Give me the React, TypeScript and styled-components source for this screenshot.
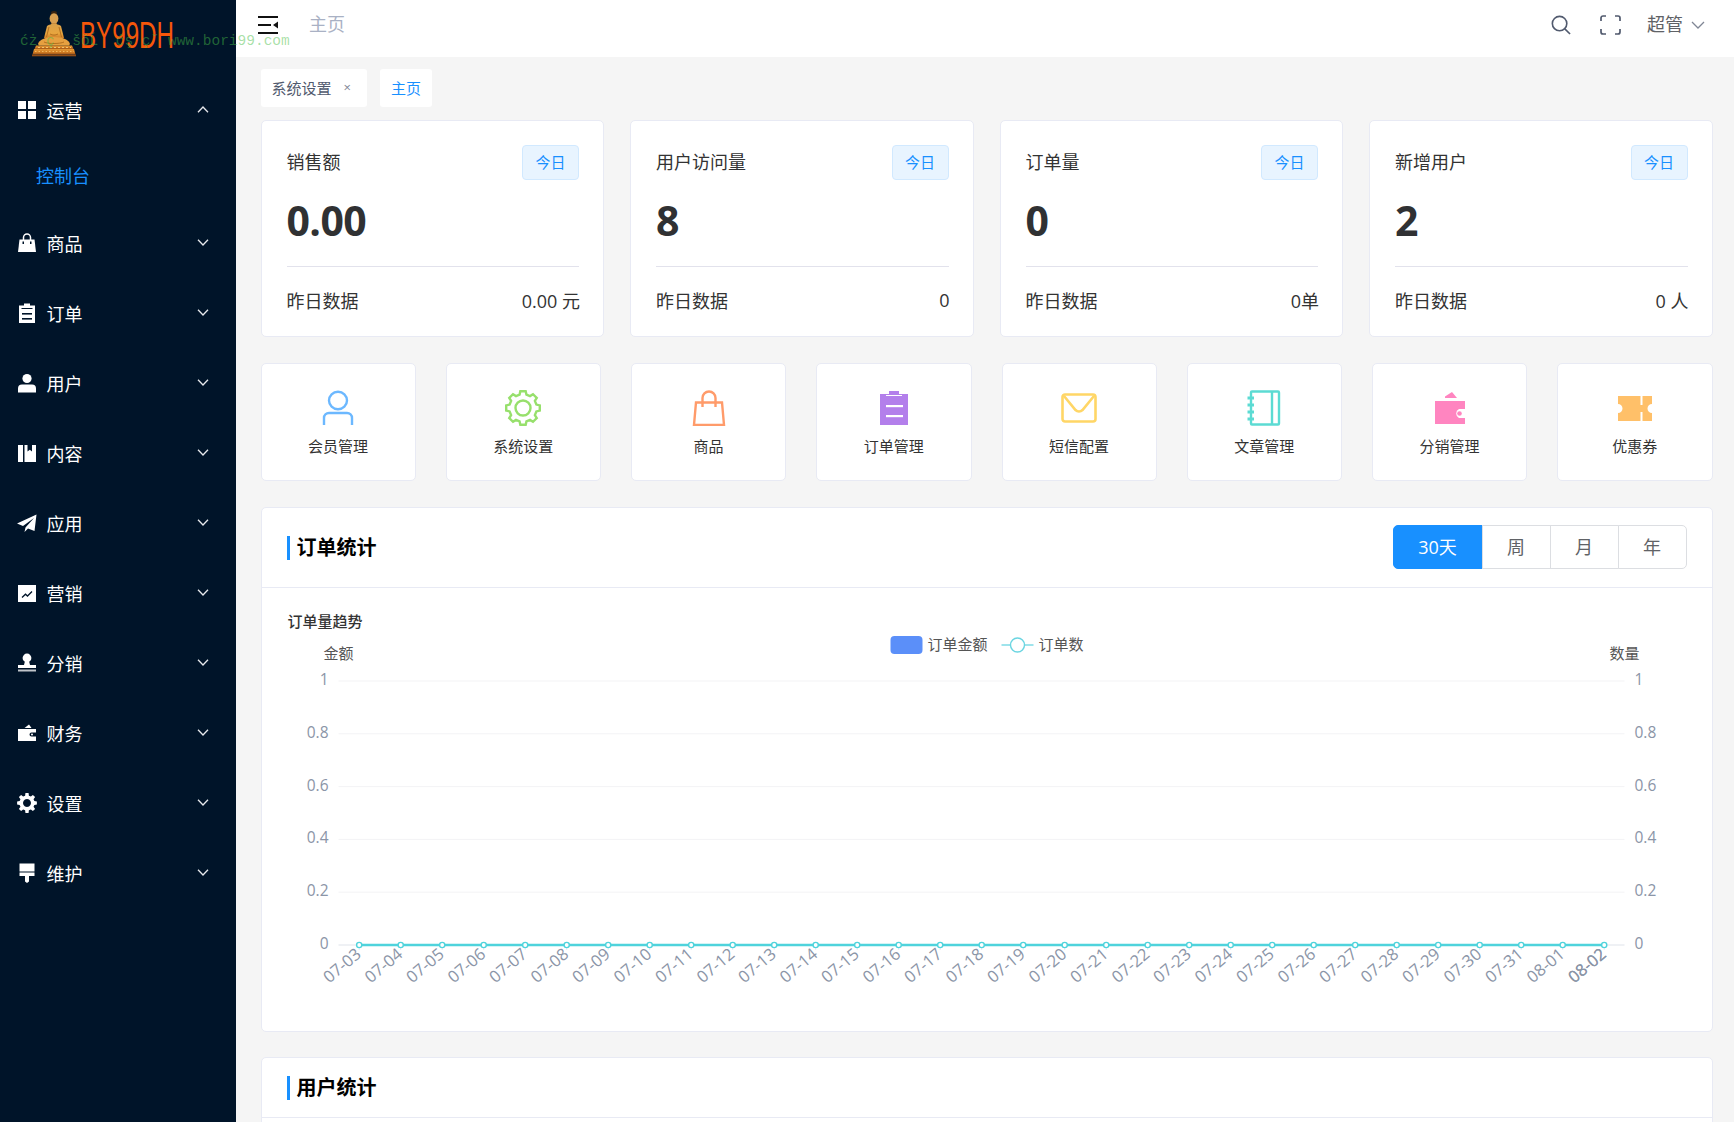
import React from "react";
import styled, { createGlobalStyle } from "styled-components";

const NAVY = "#001429";
const BLUE = "#1890ff";
const FONT = `"Open Sans", "Noto Sans CJK SC", sans-serif`;

const GlobalStyle = createGlobalStyle`
  html, body {
    margin: 0;
    height: 100%;
    overflow: hidden;
    background: #f5f5f5;
    font-family: ${FONT};
  }
  * { box-sizing: border-box; }
`;

// outline of a cog wheel, used by the sidebar icon and the shortcut icon
const gearPath = (cx: number, cy: number, outer: number, inner: number, teeth: number) => {
  const step = (Math.PI * 2) / teeth;
  let d = "";
  for (let i = 0; i < teeth; i++) {
    const a = i * step;
    const pts: [number, number][] = [
      [a - step * 0.32, inner],
      [a - step * 0.2, outer],
      [a + step * 0.2, outer],
      [a + step * 0.32, inner],
    ];
    pts.forEach(([t, r], j) => {
      const x = (cx + Math.sin(t) * r).toFixed(2);
      const y = (cy - Math.cos(t) * r).toFixed(2);
      d += `${i === 0 && j === 0 ? "M" : "L"}${x} ${y}`;
    });
  }
  return d + "Z";
};

const NavIcon = ({ children }: { children: React.ReactNode }) => (
  <svg width="20" height="20" viewBox="0 0 20 20" fill="#fff">{children}</svg>
);

const navIcons: Record<string, React.ReactNode> = {
  grid: (
    <>
      <rect x="1" y="1" width="8" height="8" />
      <rect x="11" y="1" width="8" height="8" />
      <rect x="1" y="11" width="8" height="8" />
      <rect x="11" y="11" width="8" height="8" />
    </>
  ),
  bag: (
    <>
      <path d="M2.5 6.5H17.5L19 19H1Z" />
      <path d="M6.5 7V4.5a3.5 3.5 0 0 1 7 0V7" fill="none" stroke="#fff" strokeWidth="1.5" />
      <rect x="5.5" y="8.5" width="1.5" height="2.5" fill={NAVY} />
      <rect x="13" y="8.5" width="1.5" height="2.5" fill={NAVY} />
    </>
  ),
  clip: (
    <>
      <rect x="2" y="2.5" width="16" height="17.5" />
      <rect x="7" y="0.5" width="6" height="3" />
      <rect x="4.5" y="5" width="11" height="1" fill={NAVY} />
      <rect x="5" y="10" width="10" height="1.6" fill={NAVY} />
      <rect x="5" y="15" width="10" height="1.6" fill={NAVY} />
    </>
  ),
  user: (
    <>
      <circle cx="10" cy="5.5" r="4.6" />
      <path d="M1 19.5V15.5a4 4 0 0 1 4-4h10a4 4 0 0 1 4 4v4Z" />
    </>
  ),
  book: (
    <>
      <rect x="1" y="2" width="5" height="17" />
      <path d="M7.5 2H10.5V8.5L12.8 6.8 15 8.5V2H19V19H7.5Z" />
    </>
  ),
  plane: <path d="M19.5 1.5 0 10.5 6 13 17 5 8.5 14.5 7.5 19 11 15.5 17.5 18Z" />,
  chart: (
    <>
      <rect x="1" y="2" width="18" height="17" />
      <path d="M5 14.5 8.5 11.2 10.5 13 15 8.5" fill="none" stroke={NAVY} strokeWidth="1.3" />
    </>
  ),
  stamp: (
    <>
      <circle cx="10" cy="5" r="4.4" />
      <path d="M8 8H12L13 12H19V15H1V12H7Z" />
      <rect x="1" y="16.5" width="18" height="2" opacity="0.75" />
    </>
  ),
  wallet: (
    <>
      <path d="M7.5 5 12 1.5 14.5 5Z" />
      <path d="M1 6H19V9.5H14.5a2 2 0 0 0 0 4H19V18H1Z" />
      <circle cx="15" cy="11.5" r="1" />
    </>
  ),
  gear: (
    <path
      fillRule="evenodd"
      d={gearPath(10, 10, 10, 7.6, 8) + "M10 6a4 4 0 1 0 .01 0Z"}
    />
  ),
  brush: (
    <>
      <rect x="2.5" y="0.5" width="15" height="8" />
      <rect x="2.5" y="9.5" width="15" height="3.5" />
      <path d="M8 13H12V18.5L10 20 8 18.5Z" />
    </>
  ),
};

const Chevron = ({ up }: { up?: boolean }) => (
  <svg width="12" height="7" viewBox="0 0 12 7" fill="none" stroke="#e6e8ec" strokeWidth="1.3">
    <path d={up ? "M1 6.3 6 1 11 6.3" : "M1 .7 6 6 11 .7"} />
  </svg>
);

const Shell = styled.div`
  display: flex;
  height: 1122px;
  overflow: hidden;
`;

const Sidebar = styled.aside`
  position: relative;
  z-index: 2;
  flex: 0 0 236px;
  background: ${NAVY};
`;

const Logo = styled.div`
  display: flex;
  align-items: flex-start;
  height: 75px;
  padding: 11px 0 0 32px;
`;

const Watermark = styled.span`
  position: absolute;
  top: 32px;
  left: 20px;
  font: 14.5px/18px "Liberation Mono", monospace;
  white-space: pre;
  color: rgba(70, 190, 70, 0.48);
  pointer-events: none;
`;

const NavRow = styled.div`
  display: flex;
  align-items: center;
  height: 70px;
  padding: 0 27px 0 16.5px;
  color: #fff;
  font-size: 18px;
`;

const NavLabel = styled.span`
  flex: 1;
  margin-left: 10px;
`;

const NavArrow = styled.span`
  display: flex;
  margin-top: -2px;
`;

const SubRow = styled.div`
  display: flex;
  align-items: center;
  height: 63px;
  padding: 0 0 4px 36px;
  color: ${BLUE};
  font-size: 18px;
`;

const Main = styled.main`
  flex: 1;
  min-width: 0;
`;

const TopBar = styled.header`
  display: flex;
  align-items: center;
  height: 57px;
  padding: 0 29px 8px 22px;
  background: #fff;
`;

const Crumb = styled.span`
  flex: 1;
  margin-left: 31px;
  padding-bottom: 3px;
  font-size: 18px;
  color: #a9b1c4;
`;

const TopIcon = styled.span<{ $gap: number }>`
  display: flex;
  margin-right: ${(p) => p.$gap}px;
`;

const UserName = styled.span`
  font-size: 18px;
  color: #606266;
  margin-right: 8px;
  padding-bottom: 3px;
`;

const Content = styled.div`
  padding: 12px 21.5px 0 24.5px;
`;

const TabBar = styled.div`
  display: flex;
  gap: 13px;
  height: 38px;
`;

const Tab = styled.div<{ $active?: boolean }>`
  display: flex;
  align-items: center;
  gap: 11px;
  padding: 0 11px 2px;
  border-radius: 3px;
  background: #fff;
  font-size: 15px;
  color: ${(p) => (p.$active ? BLUE : "#515a6e")};
`;

const TabClose = styled.span`
  font-size: 13px;
  color: #808695;
  margin: 0 5px 0 1px;
`;

const StatGrid = styled.section`
  display: grid;
  grid-template-columns: repeat(4, 1fr);
  gap: 26px;
  margin-top: 13px;
`;

const Card = styled.div`
  background: #fff;
  border: 1px solid #e8eaf4;
  border-radius: 5px;
`;

const StatCard = styled(Card)`
  height: 217px;
  padding: 24px 24px 0 25px;
`;

const StatHead = styled.div`
  display: flex;
  align-items: center;
  justify-content: space-between;
  height: 35px;
  font-size: 18px;
  color: #333;
`;

const StatTitle = styled.span`
  padding-bottom: 4px;
`;

const TodayTag = styled.span`
  display: flex;
  align-items: center;
  justify-content: center;
  width: 57px;
  height: 35px;
  padding-bottom: 3px;
  border: 1px solid #d1e9ff;
  border-radius: 4px;
  background: #e8f4ff;
  color: ${BLUE};
  font-size: 15px;
`;

const StatValue = styled.div`
  height: 50px;
  margin-top: 15px;
  font-size: 41px;
  letter-spacing: -0.6px;
  line-height: 50px;
  font-weight: 700;
  color: #303133;
`;

const StatFoot = styled.div`
  display: flex;
  justify-content: space-between;
  align-items: center;
  height: 70px;
  margin-top: 21px;
  padding-bottom: 4px;
  border-top: 1px solid #e2e2ec;
  font-size: 18px;
  color: #333;
`;

const StatPrev = styled.span`
  margin-right: -1px;
`;

const ShortcutGrid = styled.section`
  display: grid;
  grid-template-columns: repeat(8, 1fr);
  gap: 30px;
  margin-top: 26px;
`;

const Shortcut = styled(Card)`
  display: flex;
  flex-direction: column;
  align-items: center;
  height: 118px;
  padding-top: 26px;
  font-size: 15px;
  line-height: 20px;
  color: #333;
  svg {
    display: block;
    margin-bottom: 10px;
  }
`;

const Panel = styled(Card)`
  margin-top: 26px;
`;

const PanelHead = styled.div`
  display: flex;
  align-items: center;
  justify-content: space-between;
  padding: 18px 25px 17px 25px;
  border-bottom: 1px solid #e8eaf4;
`;

const PanelTitle = styled.h2`
  margin: 0;
  padding-left: 7px;
  border-left: 3px solid ${BLUE};
  font-size: 20px;
  line-height: 24px;
  font-weight: 700;
  color: #000;
`;

const RangeGroup = styled.div`
  display: flex;
  height: 44px;
  margin: -1px 0 1px;
`;

const RangeButton = styled.button<{ $active?: boolean; $w: number }>`
  width: ${(p) => p.$w}px;
  margin-left: -1px;
  padding: 0 0 3px;
  border: 1px solid ${(p) => (p.$active ? BLUE : "#dcdee2")};
  background: ${(p) => (p.$active ? BLUE : "#fff")};
  color: ${(p) => (p.$active ? "#fff" : "#606266")};
  font: 18px ${FONT};
  &:first-child {
    margin-left: 0;
    border-radius: 5px 0 0 5px;
  }
  &:last-child {
    border-radius: 0 5px 5px 0;
  }
`;

const ChartSvg = styled.svg`
  display: block;
  width: 100%;
  height: 443px;
  font-family: ${FONT};
`;

const TallPanel = styled(Panel)`
  min-height: 300px;
  margin-top: 25px;
`;

const stats = [
  { title: "销售额", value: "0.00", foot: "0.00 元" },
  { title: "用户访问量", value: "8", foot: "0" },
  { title: "订单量", value: "0", foot: "0单" },
  { title: "新增用户", value: "2", foot: "0 人" },
];

const nav = [
  { icon: "bag", label: "商品" },
  { icon: "clip", label: "订单" },
  { icon: "user", label: "用户" },
  { icon: "book", label: "内容" },
  { icon: "plane", label: "应用" },
  { icon: "chart", label: "营销" },
  { icon: "stamp", label: "分销" },
  { icon: "wallet", label: "财务" },
  { icon: "gear", label: "设置" },
  { icon: "brush", label: "维护" },
];

const shortcuts: { label: string; art: React.ReactNode }[] = [
  {
    label: "会员管理",
    art: (
      <g fill="none" stroke="#6cb8ff" strokeWidth="2.4">
        <ellipse cx="18" cy="10.5" rx="9" ry="8.8" />
        <path d="M4 35V28a5 5 0 0 1 5-5h18a5 5 0 0 1 5 5v7" />
      </g>
    ),
  },
  {
    label: "系统设置",
    art: (
      <g fill="none" stroke="#97e06c" strokeWidth="2.4">
        <path d={gearPath(18, 18, 17, 13.8, 8)} />
        <circle cx="18" cy="18" r="7.5" />
      </g>
    ),
  },
  {
    label: "商品",
    art: (
      <g fill="none" stroke="#ff9b6a" strokeWidth="2.4">
        <path d="M5 12.5H31L33 35H3Z" />
        <path d="M11.5 17V8a6.5 6.5 0 0 1 13 0V17" />
      </g>
    ),
  },
  {
    label: "订单管理",
    art: (
      <g fill="#b37feb">
        <rect x="4" y="4" width="28" height="31" />
        <rect x="13" y="1" width="10" height="4" />
        <rect x="10" y="5" width="16" height="1" fill="#fff" />
        <rect x="10" y="15" width="17" height="2.2" fill="#fff" />
        <rect x="10" y="25" width="17" height="2.2" fill="#fff" />
      </g>
    ),
  },
  {
    label: "短信配置",
    art: (
      <g fill="none" stroke="#ffd666" strokeWidth="2.6">
        <rect x="1.5" y="4.5" width="33" height="27" rx="2.5" />
        <path d="M3 6 14.5 20a5 5 0 0 0 7 0L33 6" />
      </g>
    ),
  },
  {
    label: "文章管理",
    art: (
      <g fill="none" stroke="#5cdbd3" strokeWidth="2.4">
        <rect x="5" y="1.5" width="28" height="33" rx="1" />
        <path d="M26 1.5V34.5" />
        <path d="M1.5 8H8M1.5 15H8M1.5 22H8M1.5 29H8" strokeWidth="2.8" />
      </g>
    ),
  },
  {
    label: "分销管理",
    art: (
      <g fill="#ff85c0">
        <path d="M13 6.5 20 2 25 8H13Z" />
        <path d="M3 11H33V19H27a5 5 0 0 0 0 9H33V34H3Z" />
        <circle cx="27.5" cy="23.5" r="2.3" />
      </g>
    ),
  },
  {
    label: "优惠券",
    art: (
      <g fill="#ffc069">
        <path d="M1 6H35V14a4.5 4.5 0 0 0 0 9V31H1V23a4.5 4.5 0 0 0 0-9Z" />
        <path d="M23.5 6H25.5V15H23.5ZM23.5 22H25.5V31H23.5Z" fill="#fff" />
      </g>
    ),
  },
];

const dates = [
  ...Array.from({ length: 29 }, (_, i) => `07-${String(i + 3).padStart(2, "0")}`),
  "08-01",
  "08-02",
];

const AXIS_TOP = 681;
const AXIS_BOTTOM = 945;
const ticks = ["1", "0.8", "0.6", "0.4", "0.2", "0"];
const LABEL = "#8b95a7";

const OrderChart = () => {
  const xs = dates.map((_, i) => 358.7 + i * 41.5);
  return (
    <ChartSvg viewBox="261.5 588 1450 443">
      <text x="287" y="627" fontSize="15" fontWeight="500" fill="#333">订单量趋势</text>
      <text x="323" y="658.5" fontSize="15" fill="#555">金额</text>
      <text x="1609" y="658.5" fontSize="15" fill="#555">数量</text>

      <rect x="890" y="636" width="32" height="18" rx="4" fill="#5b8ff9" />
      <text x="927" y="649.5" fontSize="15" fill="#555">订单金额</text>
      <path d="M1001 645H1033" stroke="#7fdbe6" strokeWidth="1.6" />
      <circle cx="1017" cy="645" r="7" fill="#fff" stroke="#6bd5e1" strokeWidth="1.4" />
      <text x="1038" y="649.5" fontSize="15" fill="#555">订单数</text>

      {ticks.map((t, i) => {
        const y = AXIS_TOP + ((AXIS_BOTTOM - AXIS_TOP) / 5) * i;
        return (
          <g key={t}>
            <path d={`M338 ${y}H1624`} stroke={i === 5 ? "#dfe3ea" : "#f3f3f5"} strokeWidth="1" />
            <text x="328" y={y + 4} textAnchor="end" fontSize="15.5" fill={LABEL}>{t}</text>
            <text x="1634" y={y + 4} fontSize="15.5" fill={LABEL}>{t}</text>
          </g>
        );
      })}

      {xs.map((x) => (
        <path key={x} d={`M${x} 945V950`} stroke="#e6ebf5" />
      ))}
      <path d={`M${xs[0]} 945H${xs[30]}`} stroke="#4fd3dc" strokeWidth="2.4" />
      {xs.map((x) => (
        <circle key={x} cx={x} cy="945" r="2.6" fill="#fff" stroke="#4fd3dc" strokeWidth="1.4" />
      ))}
      {[...dates, "08-02"].map((d, i) => {
        const x = xs[Math.min(i, 30)];
        return (
          <text
            key={i}
            x={x + 3}
            y="956"
            textAnchor="end"
            fontSize="16.5"
            fill={LABEL}
            transform={`rotate(-40 ${x + 3} 956)`}
          >
            {d}
          </text>
        );
      })}
    </ChartSvg>
  );
};

const Buddha = () => (
  <svg width="45" height="46" viewBox="0 0 45 46">
    <defs>
      <linearGradient id="gold" x1="0" y1="0" x2="0" y2="1">
        <stop offset="0" stopColor="#d9a04a" />
        <stop offset="0.55" stopColor="#e8a53e" />
        <stop offset="1" stopColor="#c46a1c" />
      </linearGradient>
      <linearGradient id="base" x1="0" y1="0" x2="0" y2="1">
        <stop offset="0" stopColor="#e59a35" />
        <stop offset="0.6" stopColor="#cf7a22" />
        <stop offset="1" stopColor="#9a5218" />
      </linearGradient>
    </defs>
    <ellipse cx="22" cy="2.2" rx="3" ry="2.2" fill="#3a2410" />
    <ellipse cx="22" cy="7.5" rx="4.4" ry="5.3" fill="#d8a052" />
    <path d="M19.5 12h5l.5 2h-6Z" fill="#c98b3e" />
    <path d="M15 15c2-1.5 4.500-2 7-2s5 .5 7 2l3 12c-3 2-6 3-10 3s-7-1-10-3Z" fill="url(#gold)" />
    <path d="M17 16 14.500 26M27 16l2.500 10M18 23c3 1.500 5 1.500 8 0" fill="none" stroke="#b5701f" strokeWidth="1" />
    <path d="M6 33c1-4 7-7 16-7s15 3 16 7l-1 1.500H7Z" fill="#e6a040" />
    <path d="M12 31c4 2 16 2 20 0" fill="none" stroke="#b5701f" strokeWidth="1" />
    <path d="M4 34.500H40L41.500 38H2.500Z" fill="url(#base)" />
    <path d="M6 36.500H39" stroke="#f3c46e" strokeWidth="1" strokeDasharray="2 2" />
    <path d="M2 38H42L43.500 43.500H.5Z" fill="url(#base)" />
    <path d="M3 40.500H42" stroke="#f1b95f" strokeWidth="1" strokeDasharray="1.500 2" />
    <rect x="0" y="43.500" width="44" height="1.800" fill="#8f4c16" />
  </svg>
);

export default function App() {
  return (
    <>
      <GlobalStyle />
      <Shell>
        <Sidebar>
          <Logo>
            <Buddha />
            <svg width="150" height="46" viewBox="0 0 150 46" style={{ marginLeft: 3 }}>
              <text
                x="0"
                y="37"
                textLength="94"
                lengthAdjust="spacingAndGlyphs"
                fontFamily="Liberation Sans, sans-serif"
                fontSize="37"
                fill="#f5570a"
              >
                BY99DH
              </text>
            </svg>
          </Logo>
          <Watermark>ćż ç  šŏĹ  ćş çˇ www.bori99.com</Watermark>
          <NavRow>
            <NavIcon>{navIcons.grid}</NavIcon>
            <NavLabel>运营</NavLabel>
            <NavArrow><Chevron up /></NavArrow>
          </NavRow>
          <SubRow>控制台</SubRow>
          {nav.map((n) => (
            <NavRow key={n.label}>
              <NavIcon>{navIcons[n.icon]}</NavIcon>
              <NavLabel>{n.label}</NavLabel>
              <NavArrow><Chevron /></NavArrow>
            </NavRow>
          ))}
        </Sidebar>

        <Main>
          <TopBar>
            <svg width="20" height="18" viewBox="0 0 20 18">
              <path d="M0 1H20M0 9H13M0 17H20" stroke="#111" strokeWidth="2" />
              <path d="M20 5.5V12.5L15 9Z" fill="#111" />
            </svg>
            <Crumb>主页</Crumb>
            <TopIcon $gap={29}>
              <svg width="20" height="20" viewBox="0 0 21 21" fill="none" stroke="#515a6e" strokeWidth="1.7">
                <circle cx="9" cy="9" r="7.6" />
                <path d="M14.5 14.5 20 20" />
              </svg>
            </TopIcon>
            <TopIcon $gap={26}>
              <svg width="21" height="20" viewBox="0 0 21 20" fill="none" stroke="#515a6e" strokeWidth="1.7">
                <path d="M6 1H3a2 2 0 0 0-2 2v3M15 1h3a2 2 0 0 1 2 2v3M6 19H3a2 2 0 0 1-2-2v-3M15 19h3a2 2 0 0 0 2-2v-3" />
              </svg>
            </TopIcon>
            <UserName>超管</UserName>
            <svg width="14" height="8" viewBox="0 0 14 8" fill="none" stroke="#808695" strokeWidth="1.3">
              <path d="M1 1 7 7 13 1" />
            </svg>
          </TopBar>

          <Content>
            <TabBar>
              <Tab>系统设置<TabClose>×</TabClose></Tab>
              <Tab $active>主页</Tab>
            </TabBar>

            <StatGrid>
              {stats.map((s) => (
                <StatCard key={s.title}>
                  <StatHead>
                    <StatTitle>{s.title}</StatTitle>
                    <TodayTag>今日</TodayTag>
                  </StatHead>
                  <StatValue>{s.value}</StatValue>
                  <StatFoot>
                    <span>昨日数据</span>
                    <StatPrev>{s.foot}</StatPrev>
                  </StatFoot>
                </StatCard>
              ))}
            </StatGrid>

            <ShortcutGrid>
              {shortcuts.map((s) => (
                <Shortcut key={s.label}>
                  <svg width="36" height="36" viewBox="0 0 36 36">{s.art}</svg>
                  {s.label}
                </Shortcut>
              ))}
            </ShortcutGrid>

            <Panel>
              <PanelHead>
                <PanelTitle>订单统计</PanelTitle>
                <RangeGroup>
                  <RangeButton $active $w={90}>30天</RangeButton>
                  <RangeButton $w={69}>周</RangeButton>
                  <RangeButton $w={69}>月</RangeButton>
                  <RangeButton $w={69}>年</RangeButton>
                </RangeGroup>
              </PanelHead>
              <OrderChart />
            </Panel>

            <TallPanel>
              <PanelHead>
                <PanelTitle>用户统计</PanelTitle>
              </PanelHead>
            </TallPanel>
          </Content>
        </Main>
      </Shell>
    </>
  );
}
